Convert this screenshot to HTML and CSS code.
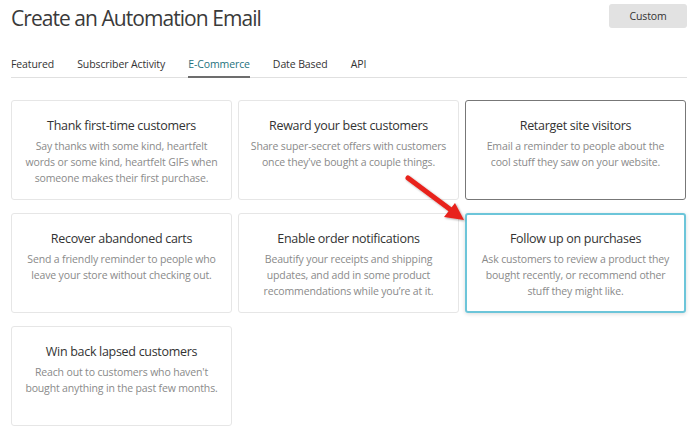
FILE: index.html
```html
<!DOCTYPE html>
<html>
<head>
    <title>Create an Automation Email</title>
    <link rel="stylesheet" href="styles.css">
</head>
<body>
    <div class="page">
        <div class="page-header">
            <h1 class="page-title">Create an Automation Email</h1>
            <button class="btn-custom">Custom</button>
        </div>
        <div class="tabs">
            <a class="tab">Featured</a>
            <a class="tab">Subscriber Activity</a>
            <a class="tab active">E-Commerce</a>
            <a class="tab">Date Based</a>
            <a class="tab">API</a>
        </div>
        <div class="cards">
            <div class="card">
                <h3>Thank first-time customers</h3>
                <p>Say thanks with some kind, heartfelt words or some kind, heartfelt GIFs when someone makes their first purchase.</p>
            </div>
            <div class="card">
                <h3>Reward your best customers</h3>
                <p>Share super-secret offers with customers once they've bought a couple things.</p>
            </div>
            <div class="card hover">
                <h3>Retarget site visitors</h3>
                <p>Email a reminder to people about the cool stuff they saw on your website.</p>
            </div>
            <div class="card">
                <h3>Recover abandoned carts</h3>
                <p>Send a friendly reminder to people who leave your store without checking out.</p>
            </div>
            <div class="card">
                <h3>Enable order notifications</h3>
                <p>Beautify your receipts and shipping updates, and add in some product recommendations while you’re at it.</p>
            </div>
            <div class="card selected">
                <h3>Follow up on purchases</h3>
                <p>Ask customers to review a product they bought recently, or recommend other stuff they might like.</p>
            </div>
            <div class="card">
                <h3>Win back lapsed customers</h3>
                <p>Reach out to customers who haven't bought anything in the past few months.</p>
            </div>
        </div>

        <!-- annotation arrow -->
        <svg class="arrow" width="700" height="433" viewBox="0 0 700 433">
            <defs>
                <filter id="sh" x="-20%" y="-20%" width="140%" height="140%">
                    <feDropShadow dx="1" dy="1" stdDeviation="1" flood-color="#000" flood-opacity="0.35"/>
                </filter>
            </defs>
            <g filter="url(#sh)">
                <line x1="408" y1="178" x2="451" y2="210" stroke="#e8231b" stroke-width="5" stroke-linecap="round"/>
                <polygon points="464,220 444,217 455,203" fill="#e8231b"/>
            </g>
        </svg>
    </div>
</body>
</html>
```

FILE: styles.css
```css
body {
    margin: 0;
    font-family: "Open Sans", "Noto Sans", sans-serif;
    background: #fff;
    color: #333;
}
.page {
    position: relative;
    padding: 3px 13px 0 11px;
}
.page-header {
    display: flex;
    justify-content: space-between;
    align-items: flex-start;
}
.page-title {
    margin: 0;
    font-size: 21px;
    font-weight: 400;
    letter-spacing: -0.95px;
    line-height: 30px;
    color: #3a3a3a;
}
.btn-custom {
    margin-top: 1px;
    width: 78px;
    height: 24px;
    border: none;
    border-radius: 3px;
    background: #e2e2e2;
    font-family: inherit;
    font-size: 10.5px;
    letter-spacing: -0.1px;
    color: #333;
}
.tabs {
    display: flex;
    gap: 23px;
    margin-top: 24px;
    border-bottom: 1px solid #e0e0e0;
}
.tab {
    font-size: 10.5px;
    letter-spacing: -0.1px;
    line-height: 15px;
    padding-bottom: 4px;
    color: #333;
    border-bottom: 2px solid transparent;
    margin-bottom: -1px;
}
.tab.active {
    color: #25727d;
    border-bottom-color: #6d6d6d;
}
.cards {
    display: grid;
    grid-template-columns: repeat(3, 221px);
    column-gap: 6px;
    row-gap: 13px;
    margin-top: 22px;
}
.card {
    height: 100px;
    box-sizing: border-box;
    border: 1px solid #e6e6e6;
    border-radius: 3px;
    padding: 16px 10px 0;
    text-align: center;
}
.card h3 {
    margin: 0 0 3px;
    font-size: 12.5px;
    font-weight: 400;
    letter-spacing: -0.3px;
    line-height: 18px;
    color: #333;
}
.card p {
    margin: 0;
    font-size: 10.5px;
    letter-spacing: -0.15px;
    line-height: 16px;
    color: #8a8a8a;
}
.card.hover {
    border-color: #777;
}
.card.selected {
    border: 2px solid #6cc5d9;
    padding-top: 15px;
    box-shadow: 0 1px 4px rgba(0,0,0,0.15);
}
.arrow {
    position: absolute;
    left: 0;
    top: 0;
    pointer-events: none;
}
```
